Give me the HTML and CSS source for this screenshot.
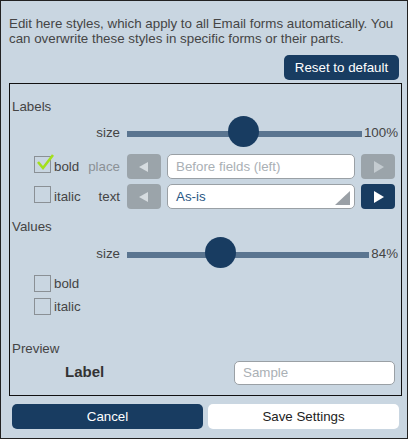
FILE: index.html
```html
<!DOCTYPE html>
<html>
<head>
<meta charset="utf-8">
<link rel="stylesheet" href="styles.css">
</head>
<body>
<div class="app">
  <p class="intro">Edit here styles, which apply to all Email forms automatically. You can overwrite these styles in specific forms or their parts.</p>
  <div class="reset-row"><button class="btn-dark reset">Reset to default</button></div>
  <div class="box">
    <div class="heading">Labels</div>
    <div class="slider-row">
      <span class="s-label">size</span>
      <div class="track"><span class="thumb" style="left:49.4%"></span></div>
      <span class="pct">100%</span>
    </div>
    <div class="ctrl-row first">
      <div class="lcell">
        <span class="cb checked"><svg class="tick" width="20" height="20" viewBox="0 0 20 20"><polyline points="2,9 7,15 17,2" fill="none" stroke="#a3e01c" stroke-width="2.6" stroke-linejoin="miter"/></svg></span>
        <span class="cb-text">bold</span>
        <span class="word muted">place</span>
      </div>
      <span class="arrow gray"><span class="tri-left"></span></span>
      <div class="field placeholder">Before fields (left)</div>
      <span class="arrow gray"><span class="tri-right"></span></span>
    </div>
    <div class="ctrl-row">
      <div class="lcell">
        <span class="cb"></span>
        <span class="cb-text">italic</span>
        <span class="word">text</span>
      </div>
      <span class="arrow gray"><span class="tri-left"></span></span>
      <div class="field select">As-is<span class="corner"></span></div>
      <span class="arrow dark"><span class="tri-right"></span></span>
    </div>
    <div class="heading values">Values</div>
    <div class="slider-row s2">
      <span class="s-label">size</span>
      <div class="track"><span class="thumb" style="left:38.4%"></span></div>
      <span class="pct">84%</span>
    </div>
    <div class="check-row c1"><span class="cb"></span><span class="cb-text">bold</span></div>
    <div class="check-row c2"><span class="cb"></span><span class="cb-text">italic</span></div>
    <div class="heading preview">Preview</div>
    <div class="preview-row">
      <span class="p-label">Label</span>
      <div class="field sample placeholder">Sample</div>
    </div>
  </div>
  <div class="footer">
    <button class="btn-dark">Cancel</button>
    <button class="btn-light">Save Settings</button>
  </div>
</div>
</body>
</html>
```
FILE: styles.css
```css
* { box-sizing: border-box; }
html, body { margin: 0; padding: 0; }
body {
  font-family: "Liberation Sans", Arial, sans-serif;
  font-size: 13.33px;
  line-height: 15px;
  color: #444;
  background: #c9d6e1;
}
.app {
  width: 408px;
  height: 439px;
  border: 1px solid #222;
  background: #c9d6e1;
  padding: 15px 5px 0 8px;
}
.intro { margin: 0; line-height: 15px; color: #454545; }
.reset-row { display: flex; justify-content: flex-end; margin-top: 9px; padding-right: 3px; }
button {
  font-family: "Liberation Sans", Arial, sans-serif;
  font-size: 13.33px;
  border: none;
  border-radius: 5px;
  padding: 0;
  height: 25px;
  cursor: pointer;
}
.btn-dark { background: #183c61; color: #fff; }
.btn-light { background: #fff; color: #222; }
.reset { width: 115px; }
.box {
  margin-top: 3px;
  border: 1px solid #111;
  padding: 15px 3px 10px 2px;
}
.heading { line-height: 15px; color: #444; }
.heading.values { margin-top: 10px; }
.heading.preview { margin-top: 26px; }

.slider-row {
  display: grid;
  grid-template-columns: 113px 1fr auto;
  column-gap: 2px;
  height: 31px;
  margin-top: 2px;
  align-items: start;
}
.slider-row.s2 { margin-top: 3px; }
.s-label { text-align: right; padding-right: 5px; margin-top: 9px; }
.pct { margin-top: 9px; color: #444; }
.track {
  position: relative;
  height: 6px;
  margin-top: 15px;
  background: #5a7590;
}
.thumb {
  position: absolute;
  top: -15px;
  width: 31px;
  height: 31px;
  margin-left: -15.5px;
  border-radius: 50%;
  background: #183c61;
}

.ctrl-row {
  display: grid;
  grid-template-columns: 109px 34px 1fr 34px;
  column-gap: 6px;
  height: 25px;
  margin-top: 5px;
  margin-right: 3px;
  align-items: center;
}
.ctrl-row.first { margin-top: 7px; }
.lcell { display: flex; align-items: center; height: 25px; }
.cb {
  position: relative;
  width: 17px;
  height: 17px;
  border: 1px solid #8a9095;
  margin-left: 22px;
  margin-bottom: 4px;
  flex: none;
}
.tick { position: absolute; left: 1px; top: -4px; }
.cb-text { margin-left: 3px; color: #444; }
.word { margin-left: auto; padding-right: 1px; color: #444; }
.word.muted { color: #8b9196; }
.arrow {
  height: 25px;
  border-radius: 4px;
  display: flex;
  align-items: center;
  justify-content: center;
}
.arrow.gray { background: #9ba4aa; }
.arrow.dark { background: #183c61; }
.tri-left {
  width: 0; height: 0;
  border-top: 5px solid transparent;
  border-bottom: 5px solid transparent;
  border-right: 9px solid #d6dce0;
  margin-left: -1px;
}
.tri-right {
  width: 0; height: 0;
  border-top: 6px solid transparent;
  border-bottom: 6px solid transparent;
  border-left: 10px solid #d6dce0;
  margin-left: 1px;
}
.arrow.gray .tri-right { border-left-color: #c4cbd0; }
.arrow.dark .tri-right { border-left-color: #fff; }
.field {
  position: relative;
  height: 25px;
  background: #fff;
  border: 1px solid #9aa0a5;
  border-radius: 5px;
  padding: 0 8px;
  line-height: 23px;
  color: #2a5885;
  white-space: nowrap;
}
.placeholder { color: #aab0b5; }
.corner {
  position: absolute;
  right: 4px;
  bottom: 3px;
  width: 0; height: 0;
  border-left: 15px solid transparent;
  border-bottom: 14px solid #9aa0a6;
}

.check-row { display: flex; align-items: center; height: 17px; }
.check-row .cb { margin-bottom: 0; }
.check-row.c1 { margin-top: 7px; }
.check-row.c2 { margin-top: 6px; }

.preview-row {
  display: grid;
  grid-template-columns: 222px 1fr;
  margin-top: 5px;
  margin-right: 3px;
  align-items: start;
}
.p-label {
  font-weight: bold;
  font-size: 15px;
  line-height: 17px;
  color: #333;
  padding-left: 53px;
  margin-top: 2px;
}
.field.sample { height: 24px; line-height: 22px; }

.footer {
  display: flex;
  gap: 5px;
  margin-top: 8px;
  padding: 0 3px;
}
.footer button { flex: 1; height: 25px; }
```
